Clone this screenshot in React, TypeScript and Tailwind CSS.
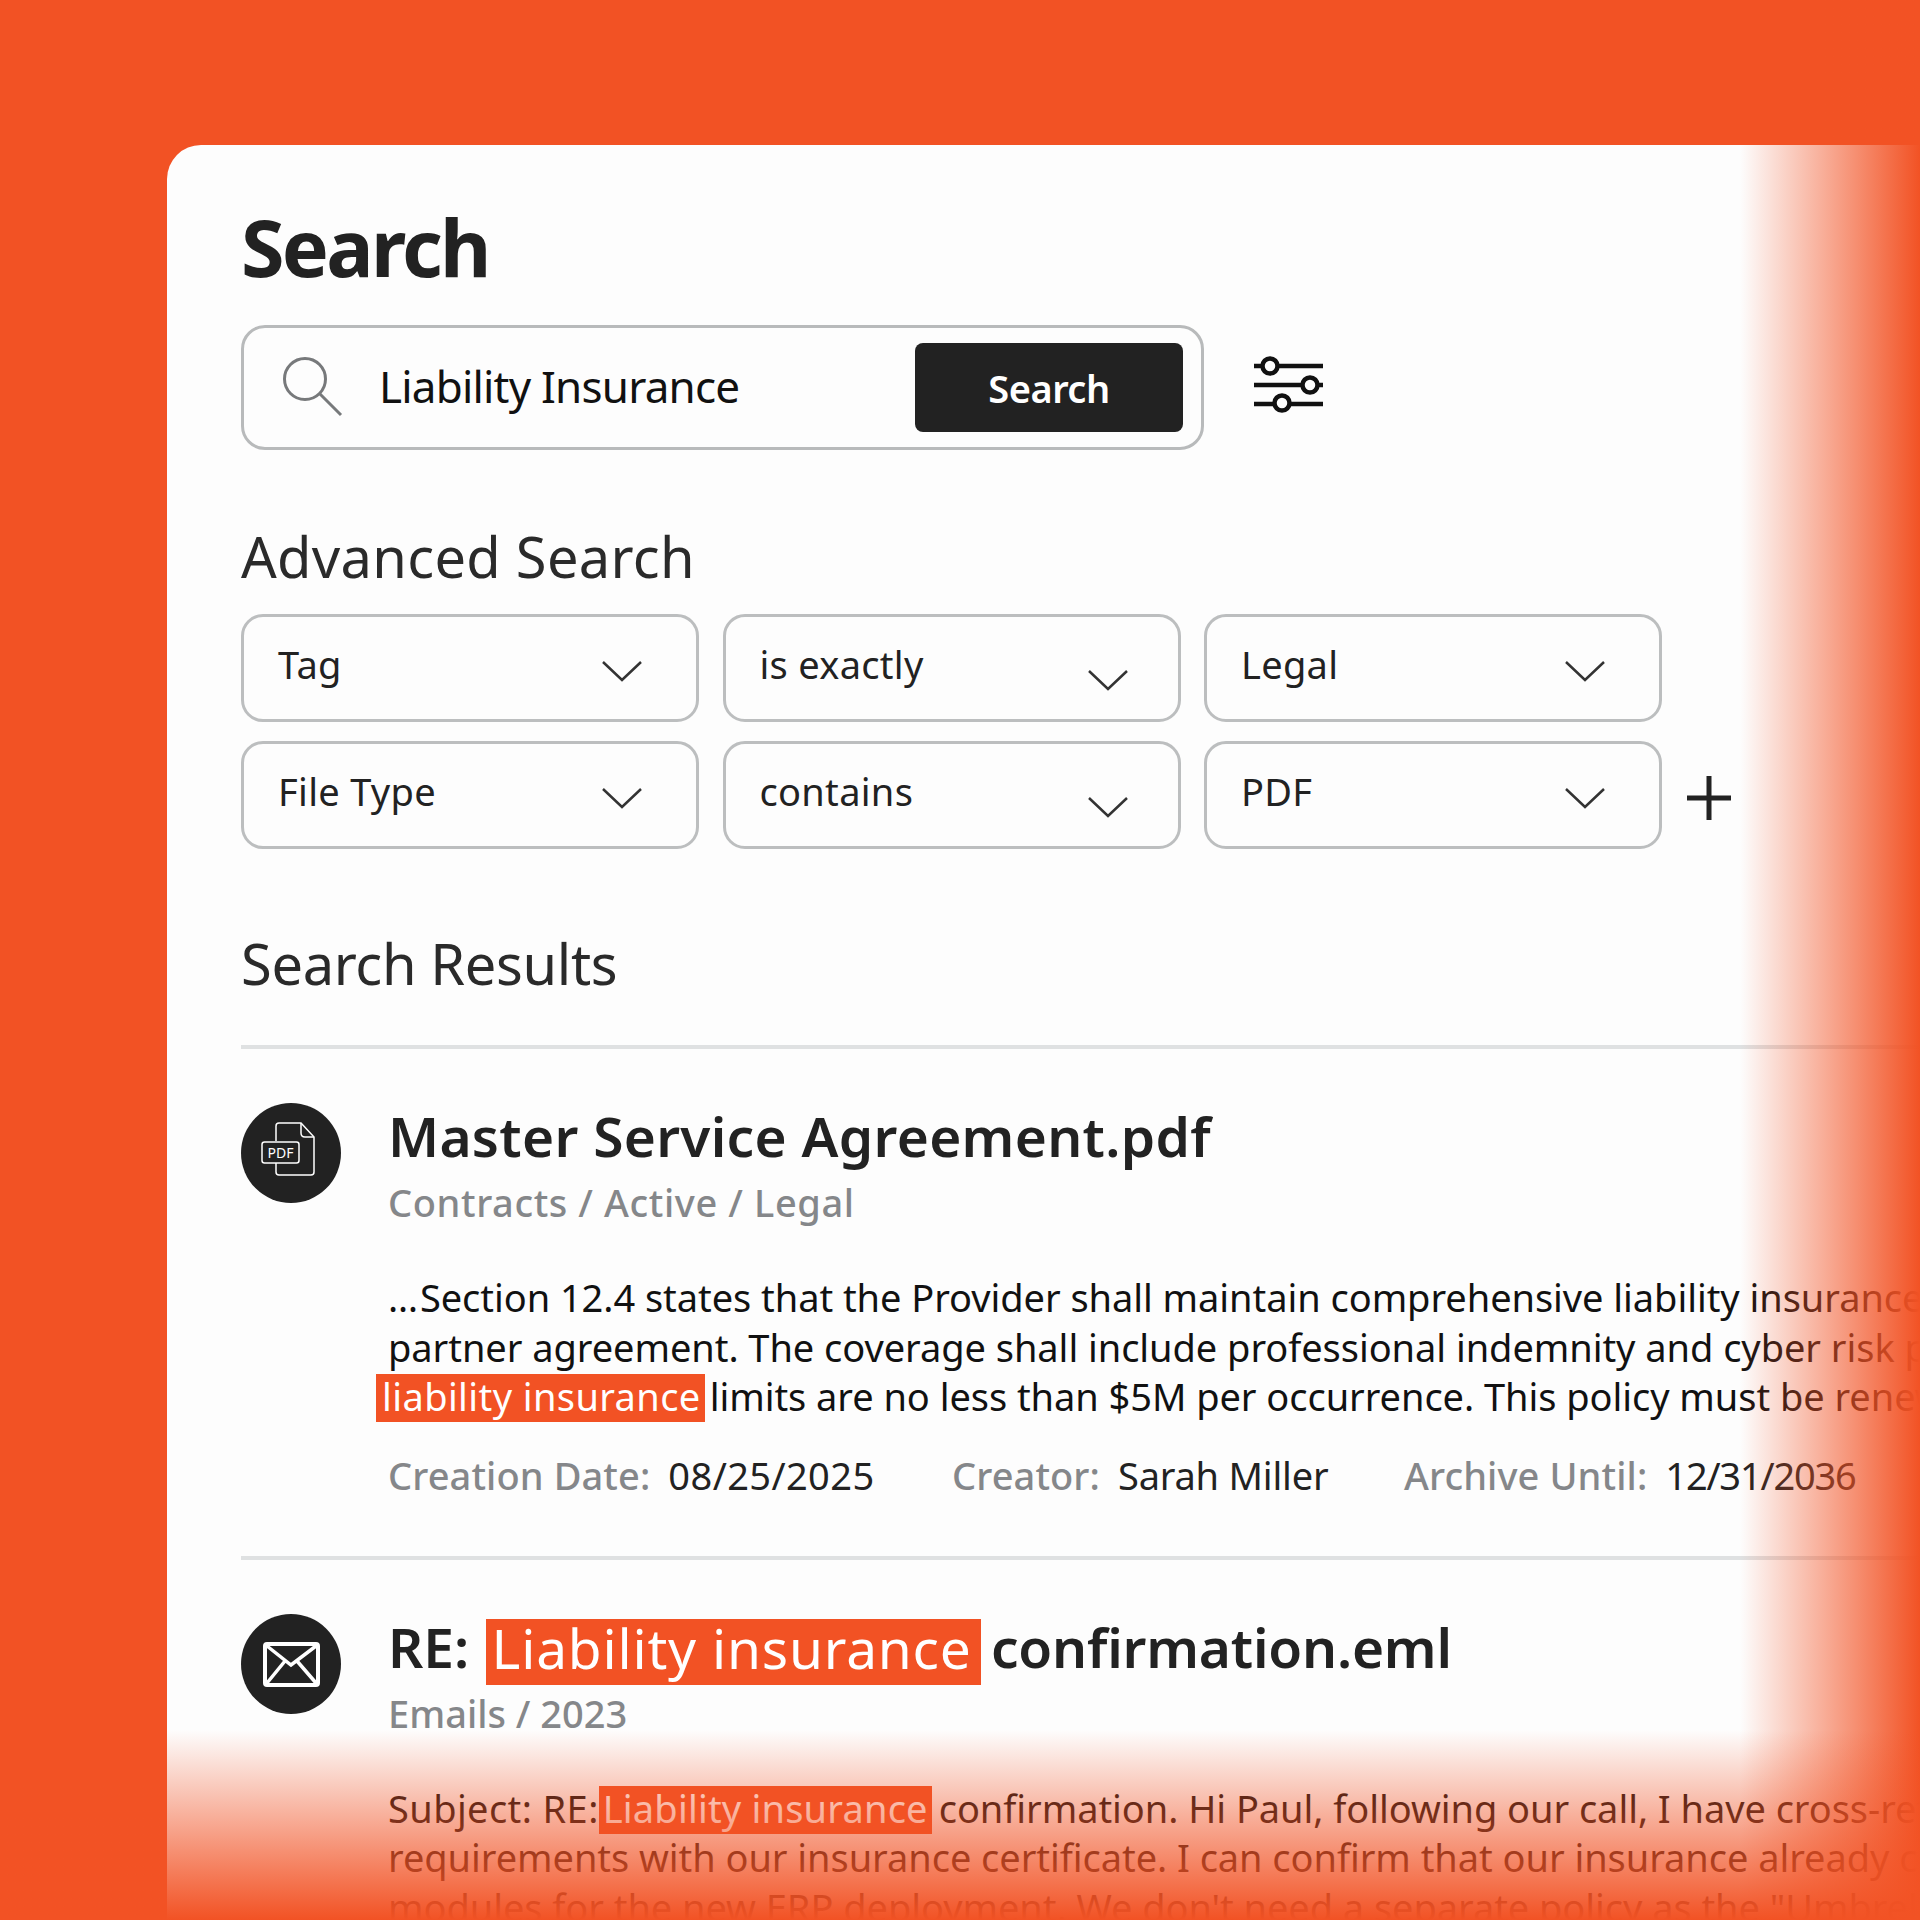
import React from "react";

const FONT = "font-['Noto_Sans',sans-serif]";

const Chevron = ({ className = "" }: { className?: string }) => (
  <svg width="42" height="24" viewBox="0 0 42 24" fill="none" className={className}>
    <path d="M2 3 L21 21 L40 3" stroke="#333" strokeWidth="2.5" />
  </svg>
);

const Select = ({ label, chevron }: { label: string; chevron: string }) => (
  <div className="relative h-[108px] w-[458px] rounded-[22px] border-[3px] border-[#bcbebf] pl-[34px] flex items-center">
    <span className="text-[38px] tracking-[0.3px] text-[#222] mb-[8px]">{label}</span>
    <Chevron className={chevron} />
  </div>
);

const Meta = ({ k, v, w, track }: { k: string; v: string; w: string; track: string }) => (
  <div className={`flex ${w} shrink-0`}>
    <span className="text-[#85878a] font-medium tracking-[0.1px] mr-[18px]">{k}</span>
    <span className={`text-[#222] ${track}`}>{v}</span>
  </div>
);

const PdfIcon = () => (
  <svg width="100" height="100" viewBox="0 0 100 100" fill="none">
    <circle cx="50" cy="50" r="50" fill="#222" />
    <path d="M35 38 V23 Q35 20 38 20 H60 L73 34 V69 Q73 72 70 72 H38 Q35 72 35 69 V60" stroke="#fff" strokeWidth="1.5" />
    <path d="M60 20 V30 Q60 34 64 34 H73" stroke="#fff" strokeWidth="1.5" />
    <rect x="21" y="39" width="37" height="21" rx="2.5" stroke="#fff" strokeWidth="1.5" />
    <text x="39.5" y="54.5" textAnchor="middle" fill="#fff" fontSize="14" fontFamily="Noto Sans, sans-serif">PDF</text>
  </svg>
);

const MailIcon = () => (
  <svg width="100" height="100" viewBox="0 0 100 100" fill="none">
    <circle cx="50" cy="50" r="50" fill="#222" />
    <rect x="24" y="30" width="53" height="41" rx="2" stroke="#fff" strokeWidth="4" />
    <path d="M26 32 L50 51 L75 32 M26 69 L44 47 M75 69 L56 47" stroke="#fff" strokeWidth="3.5" />
  </svg>
);

export default function App() {
  return (
    <div className={`${FONT} relative h-[1920px] w-[1920px] overflow-hidden bg-[#f25224] pt-[145px] pl-[167px]`}>
      <div className="h-[1800px] rounded-tl-[34px] bg-[#fdfdfd] pl-[74px] pt-[69px] overflow-hidden">
        <h1 className="h-[66px] text-[79px] leading-[66px] font-bold tracking-[-2.7px] text-[#222]">Search</h1>

        <div className="mt-[45px] flex items-center">
          <div className="flex h-[125px] w-[963px] items-center rounded-[24px] border-[3px] border-[#b8babb] pl-[37px]">
            <svg width="62" height="62" viewBox="0 0 62 62" fill="none" className="mb-[4px]">
              <circle cx="24" cy="24" r="20.5" stroke="#77797b" strokeWidth="3" />
              <path d="M38 38 L60 60" stroke="#77797b" strokeWidth="3" />
            </svg>
            <span className="ml-[36px] mb-[4px] text-[44px] tracking-[-0.8px] text-[#111]">Liability Insurance</span>
            <button className="ml-auto mr-[18px] h-[89px] w-[268px] rounded-[8px] bg-[#222] pt-[2px] text-[38px] font-semibold tracking-[-0.5px] text-white">
              Search
            </button>
          </div>
          <svg width="72" height="62" viewBox="0 0 72 62" fill="none" className="ml-[49px] mb-[6px]">
            <path d="M1 12 H70 M1 31 H70 M1 50 H70" stroke="#111" strokeWidth="4.5" />
            <circle cx="17" cy="12" r="7.5" fill="#fdfdfd" stroke="#111" strokeWidth="4.5" />
            <circle cx="57" cy="31" r="7.5" fill="#fdfdfd" stroke="#111" strokeWidth="4.5" />
            <circle cx="29" cy="49" r="7.5" fill="#fdfdfd" stroke="#111" strokeWidth="4.5" />
          </svg>
        </div>

        <h2 className="mt-[74px] h-[64px] text-[56px] leading-[64px] tracking-[0.3px] text-[#2a2a2a]">Advanced Search</h2>

        <div className="mt-[26px] flex flex-col gap-[19px]">
          <div className="flex gap-[23.5px]">
            <Select label="Tag" chevron="absolute right-[53px] top-[42px]" />
            <Select label="is exactly" chevron="absolute right-[49px] top-[51px]" />
            <Select label="Legal" chevron="absolute right-[53px] top-[42px]" />
          </div>
          <div className="flex items-center gap-[23.5px]">
            <Select label="File Type" chevron="absolute right-[53px] top-[42px]" />
            <Select label="contains" chevron="absolute right-[49px] top-[51px]" />
            <Select label="PDF" chevron="absolute right-[53px] top-[42px]" />
            <svg width="46" height="46" viewBox="0 0 46 46" fill="none" className="ml-[0px] mt-[6px]">
              <path d="M1 23 H45 M23 1 V45" stroke="#222" strokeWidth="5" />
            </svg>
          </div>
        </div>

        <h2 className="mt-[82px] h-[64px] text-[56px] leading-[64px] tracking-[-0.35px] text-[#2a2a2a]">Search Results</h2>

        <div className="mt-[50px] h-[4px] bg-[#dfe1e2]" />

        <div className="mt-[54px] flex">
          <div className="shrink-0"><PdfIcon /></div>
          <div className="ml-[47px] min-w-0">
            <h3 className="mt-[-2px] h-[70px] text-[55px] leading-[70px] font-semibold tracking-[0.3px] text-[#222] whitespace-nowrap">
              Master Service Agreement.pdf
            </h3>
            <p className="mt-[4px] h-[54px] text-[38px] leading-[54px] font-medium tracking-[0.6px] text-[#85878a]">
              Contracts / Active / Legal
            </p>
            <div className="mt-[44px] text-[38px] leading-[49.5px] tracking-[-0.05px] text-[#111] whitespace-nowrap">
              <p><span className="tracking-[-8px]">…</span> Section 12.4 states that the Provider shall maintain comprehensive liability insurance</p>
              <p>partner agreement. The coverage shall include professional indemnity and cyber risk policy</p>
              <p className="h-[49.5px]">
                <span className="ml-[-12px] inline-block h-[48px] bg-[#f25224] pl-[6px] pr-[4px] leading-[44px] tracking-[0.4px] text-[#fff]">liability insurance</span>
                <span className="ml-[5px]">limits are no less than $5M per occurrence. This policy must be renewed</span>
              </p>
            </div>
            <div className="mt-[28px] flex text-[38px] leading-[50px] whitespace-nowrap">
              <Meta k="Creation Date:" v="08/25/2025" w="w-[564px]" track="tracking-[0.4px]" />
              <Meta k="Creator:" v="Sarah Miller" w="w-[452px]" track="tracking-[-0.2px]" />
              <Meta k="Archive Until:" v="12/31/2036" w="w-[500px]" track="tracking-[-1.2px]" />
            </div>
          </div>
        </div>

        <div className="mt-[56px] h-[4px] bg-[#dfe1e2]" />

        <div className="mt-[54px] flex">
          <div className="shrink-0"><MailIcon /></div>
          <div className="ml-[47px] min-w-0">
            <h3 className="mt-[-2px] h-[70px] text-[55px] leading-[70px] font-semibold tracking-[0px] text-[#222] whitespace-nowrap">
              RE:{" "}
              <span className="ml-[2px] mt-[7px] inline-block h-[66px] bg-[#f25224] pl-[6px] pr-[9px] align-top leading-[57px] font-normal tracking-[0.8px] text-white">Liability insurance</span>{" "}
              <span className="ml-[-4px] tracking-[-0.2px]">confirmation.eml</span>
            </h3>
            <p className="mt-[4px] h-[54px] text-[38px] leading-[54px] font-medium tracking-[0px] text-[#85878a]">
              Emails / 2023
            </p>
            <div className="mt-[44px] text-[38px] leading-[49.5px] tracking-[-0.05px] text-[#111] whitespace-nowrap">
              <p className="h-[49.5px]">
                <span className="tracking-[0.4px]">Subject: RE:</span>
                <span className="inline-block h-[48px] bg-[#f25224] px-[4px] leading-[44px] tracking-[0.2px] text-white">Liability insurance</span>
                <span className="ml-[7px]">confirmation. Hi Paul, following our call, I have cross-referenced the</span>
              </p>
              <p>requirements with our insurance certificate. I can confirm that our insurance already covers</p>
              <p>modules for the new ERP deployment. We don't need a separate policy as the "Umbrella"</p>
            </div>
          </div>
        </div>
      </div>

      {/* fades over the card edges */}
      <div className="absolute inset-y-0 right-0 w-[180px] bg-gradient-to-r from-[#f2522400] via-[#f2522480] to-[#f25224] pointer-events-none" />
      <div className="absolute inset-x-0 bottom-0 h-[190px] bg-gradient-to-b from-[#f2522400] via-[#f2522480] to-[#f25224] pointer-events-none" />
    </div>
  );
}
